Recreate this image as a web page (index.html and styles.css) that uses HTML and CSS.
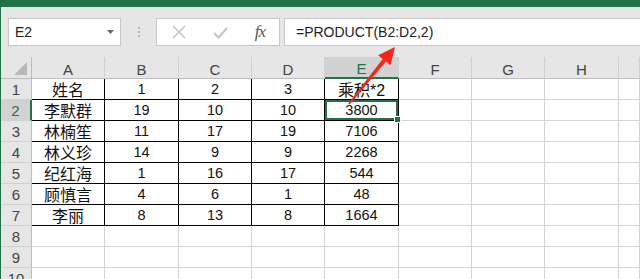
FILE: index.html
```html
<!DOCTYPE html>
<html lang="zh-CN">
<head>
    <meta charset="UTF-8">
    <meta name="viewport" content="width=device-width, initial-scale=1.0">
    <title>乘积</title>
    <link rel="stylesheet" href="styles.css">
</head>
<body>
    <div class="app">
        <div class="ribbon-edge"></div>
        <div class="formula-bar">
            <div class="name-box">
                <span>E2</span>
                <svg class="caret" width="7" height="4" viewBox="0 0 7 4"><path d="M0 0H7L3.5 4Z" fill="#666"/></svg>
            </div>
            <div class="grip"><i></i><i></i><i></i></div>
            <div class="fx-buttons">
                <svg width="14" height="14" viewBox="0 0 14 14"><path d="M1 1L13 13M13 1L1 13" stroke="#c4c4c4" stroke-width="1.5" fill="none"/></svg>
                <svg width="15" height="13" viewBox="0 0 15 13"><path d="M1 7L5.5 11.5L14 2" stroke="#c4c4c4" stroke-width="2" fill="none"/></svg>
                <span class="fx">fx</span>
            </div>
            <div class="formula-input">=PRODUCT(B2:D2,2)</div>
        </div>
        <div class="sheet" id="sheet"></div>
        <svg class="arrow" width="640" height="279" viewBox="0 0 640 279">
            <polygon points="395,47 390.5,65.2 385.9,61.5 349.8,104.6 348.2,103.4 382.7,58.9 378.1,55.2" fill="#f5261b"/>
        </svg>
    </div>

    <script>
        const sheet = document.getElementById('sheet');
        const letters = ['', 'A', 'B', 'C', 'D', 'E', 'F', 'G', 'H', ''];
        const data = [
            ['姓名', '1', '2', '3', '乘积*2'],
            ['李默群', '19', '10', '10', '3800'],
            ['林楠笙', '11', '17', '19', '7106'],
            ['林义珍', '14', '9', '9', '2268'],
            ['纪红海', '1', '16', '17', '544'],
            ['顾慎言', '4', '6', '1', '48'],
            ['李丽', '8', '13', '8', '1664']
        ];

        function addCell(className, text) {
            const cell = document.createElement('div');
            cell.className = className;
            cell.textContent = text;
            sheet.appendChild(cell);
        }

        // column headers
        letters.forEach((letter, i) => {
            let cls = i === 0 ? 'col-head corner' : 'col-head';
            if (letter === 'E') cls += ' active';
            addCell(cls, letter);
        });

        // rows 1-10
        for (let r = 1; r <= 10; r++) {
            addCell(r === 2 ? 'row-head active' : 'row-head', r);
            for (let c = 1; c < letters.length; c++) {
                const row = data[r - 1];
                let cls = 'cell';
                let text = '';
                if (row && c <= 5) {
                    cls += ' boxed';
                    text = row[c - 1];
                    if (/[\u4e00-\u9fff]/.test(text)) cls += ' cjk';
                }
                if (r === 2 && c === 5) cls += ' selected';
                addCell(cls, text);
            }
        }
    </script>
</body>
</html>
```

FILE: styles.css
```css
/* General Styles */
body {
    margin: 0;
    padding: 0;
    width: 640px;
    height: 279px;
    overflow: hidden;
    background-color: #FFFFFF;
    font-family: "Liberation Sans", "Noto Sans CJK SC", sans-serif;
}
.app {
    position: relative;
    height: 279px;
    border-left: 1px solid #217346;
}
.ribbon-edge {
    height: 7px;
    background-color: #217346;
}

/* Formula bar */
.formula-bar {
    display: flex;
    align-items: stretch;
    height: 28px;
    padding: 11px 0 11px 7px;
    background-color: #E6E6E6;
}
.name-box {
    width: 113px;
    display: flex;
    align-items: center;
    justify-content: space-between;
    padding: 0 6px;
    box-sizing: border-box;
    background-color: #FFFFFF;
    border: 1px solid #C6C6C6;
    font-size: 14px;
    color: #222;
}
.grip {
    width: 35px;
    display: flex;
    flex-direction: column;
    align-items: center;
    justify-content: center;
    gap: 2px;
}
.grip i {
    width: 2px;
    height: 2px;
    background-color: #B4B4B4;
}
.fx-buttons {
    width: 124px;
    display: flex;
    align-items: center;
    justify-content: space-between;
    padding: 0 14px 0 15px;
    box-sizing: border-box;
    background-color: #FFFFFF;
    border: 1px solid #C6C6C6;
}
.fx {
    font-family: "Liberation Serif", serif;
    font-style: italic;
    font-size: 17px;
    color: #555;
    letter-spacing: -1px;
}
.formula-input {
    flex: 1;
    margin-left: 4px;
    padding-left: 11px;
    display: flex;
    align-items: center;
    background-color: #FFFFFF;
    border: 1px solid #C6C6C6;
    border-right: none;
    font-size: 14px;
    color: #222;
}

/* Sheet */
.sheet {
    display: grid;
    grid-template-columns: 31px 73px 74px 73px 73px 74px 73px 73px 74px 1fr;
    grid-template-rows: 22px repeat(10, 21px);
    background-color: #FFFFFF;
}
.sheet > div {
    box-sizing: border-box;
    display: flex;
    align-items: center;
    justify-content: center;
    white-space: nowrap;
}
.col-head {
    background-color: #E6E6E6;
    border-bottom: 1px solid #BDBDBD;
    border-right: 1px solid #D0D0D0;
    font-size: 15px;
    color: #444;
    padding-top: 3px;
}
.col-head.corner {
    position: relative;
    border-right: 1px solid #BDBDBD;
}
.col-head.corner::after {
    content: "";
    position: absolute;
    right: 4px;
    bottom: 3px;
    border-left: 13px solid transparent;
    border-bottom: 13px solid #B9B9B9;
}
.col-head.active {
    background-color: #D2D2D2;
    color: #217346;
    border-bottom: 2px solid #217346;
}
.row-head {
    background-color: #E6E6E6;
    border-right: 1px solid #BDBDBD;
    border-bottom: 1px solid #D0D0D0;
    font-size: 15px;
    color: #444;
}
.row-head.active {
    background-color: #D2D2D2;
    color: #217346;
    border-right: 2px solid #217346;
}
.cell {
    border-right: 1px solid #D4D4D4;
    border-bottom: 1px solid #D4D4D4;
    font-size: 14.5px;
    color: #111;
}
.cell.cjk {
    font-size: 16px;
}
.cell.boxed {
    border-right: 1px solid #000;
    border-bottom: 1px solid #000;
}
.cell.selected {
    position: relative;
    box-shadow: inset 0 0 0 2px #217346;
}
.cell.selected::after {
    content: "";
    position: absolute;
    right: -3px;
    bottom: -3px;
    width: 5px;
    height: 5px;
    background-color: #217346;
    border: 1px solid #FFFFFF;
}

/* Annotation arrow */
.arrow {
    position: absolute;
    left: -1px;
    top: 0;
    pointer-events: none;
}
```
